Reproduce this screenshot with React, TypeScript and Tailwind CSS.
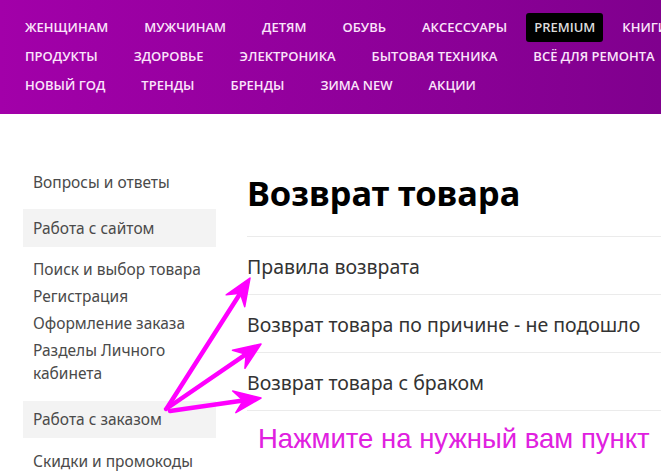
import React from "react";

const row1 = ["ЖЕНЩИНАМ", "МУЖЧИНАМ", "ДЕТЯМ", "ОБУВЬ", "АКСЕССУАРЫ", "PREMIUM", "КНИГИ"];
const row2 = ["ПРОДУКТЫ", "ЗДОРОВЬЕ", "ЭЛЕКТРОНИКА", "БЫТОВАЯ ТЕХНИКА", "ВСЁ ДЛЯ РЕМОНТА"];
const row3 = ["НОВЫЙ ГОД", "ТРЕНДЫ", "БРЕНДЫ", "ЗИМА NEW", "АКЦИИ"];

const returnLinks = [
  "Правила возврата",
  "Возврат товара по причине - не подошло",
  "Возврат товара с браком",
];

function NavRow({ items }: { items: string[] }) {
  return (
    <div className="flex whitespace-nowrap leading-[29px]">
      {items.map((item) =>
        item === "PREMIUM" ? (
          <span key={item} className="ml-[1px] mr-[1px] rounded-[3px] bg-black px-2 text-[#dcdcdc]">
            {item}
          </span>
        ) : (
          <span key={item} className="px-[18px]">
            {item}
          </span>
        )
      )}
    </div>
  );
}

function Arrow({ x1, y1, x2, y2 }: { x1: number; y1: number; x2: number; y2: number }) {
  const dx = x2 - x1;
  const dy = y2 - y1;
  const len = Math.hypot(dx, dy);
  const ux = dx / len;
  const uy = dy / len;
  const nx = -uy;
  const ny = ux;
  const L = 27;
  const W = 11;
  const N = 9;
  const bx = x2 - ux * L;
  const by = y2 - uy * L;
  const pts = [
    [x2, y2],
    [bx + nx * W, by + ny * W],
    [x2 - ux * (L - N), y2 - uy * (L - N)],
    [bx - nx * W, by - ny * W],
  ]
    .map((p) => p.join(","))
    .join(" ");
  return (
    <g fill="#f0f" stroke="#f0f">
      <line
        x1={x1}
        y1={y1}
        x2={x2 - ux * (L - N)}
        y2={y2 - uy * (L - N)}
        strokeWidth={4.5}
        strokeLinecap="round"
      />
      <polygon points={pts} strokeWidth={1.5} strokeLinejoin="round" />
    </g>
  );
}

export default function App() {
  return (
    <div className="relative min-h-screen overflow-hidden bg-white font-['Noto_Sans',sans-serif]">
      <header className="overflow-hidden bg-linear-to-r from-[#a200a9] to-[#80008e] pt-[13px] pb-[14px] pl-[7px] font-['Open_Sans',sans-serif] text-[13px] font-semibold text-[#fbe4fb]">
        <NavRow items={row1} />
        <NavRow items={row2} />
        <NavRow items={row3} />
      </header>

      <div className="flex gap-[31px] pl-[23px]">
        <aside className="w-[193px] shrink-0 pt-[50px] text-[15.5px] text-[#4a4a4a]">
          <div className="px-[10px] leading-[37px]">Вопросы и ответы</div>
          <div className="mt-[8px] bg-[#f3f3f3] px-[10px] leading-[38px]">Работа с сайтом</div>
          <ul className="mt-[9px] px-[10px] leading-[23px]">
            <li className="py-[2px]">Поиск и выбор товара</li>
            <li className="py-[2px]">Регистрация</li>
            <li className="py-[2px]">Оформление заказа</li>
            <li className="py-[2px]">Разделы Личного кабинета</li>
          </ul>
          <div className="mt-[14px] bg-[#f3f3f3] px-[10px] leading-[37px]">Работа с заказом</div>
          <div className="mt-[5px] px-[10px] leading-[37px]">Скидки и промокоды</div>
        </aside>

        <main className="flex-1 pt-[58px]">
          <h1 className="text-[34.5px] font-bold leading-[42px] text-black">Возврат товара</h1>
          <ul className="mt-[22px] border-t border-[#ebebeb]">
            {returnLinks.map((link) => (
              <li
                key={link}
                className="flex h-[58px] items-center whitespace-nowrap border-b border-[#ebebeb] pt-[3px] text-[19.5px] text-[#333]"
              >
                {link}
              </li>
            ))}
          </ul>
          <p className="mt-[11px] whitespace-nowrap pl-[11px] font-['Liberation_Sans',sans-serif] text-[27.5px] leading-[34px] text-[#e020e0]">
            Нажмите на нужный вам пункт
          </p>
        </main>
      </div>

      <svg className="pointer-events-none absolute left-0 top-0" width="661" height="476" viewBox="0 0 661 476">
        <Arrow x1={167} y1={408} x2={250} y2={278} />
        <Arrow x1={166} y1={409} x2={261} y2={344} />
        <Arrow x1={170} y1={411} x2={261} y2={398} />
      </svg>
    </div>
  );
}
